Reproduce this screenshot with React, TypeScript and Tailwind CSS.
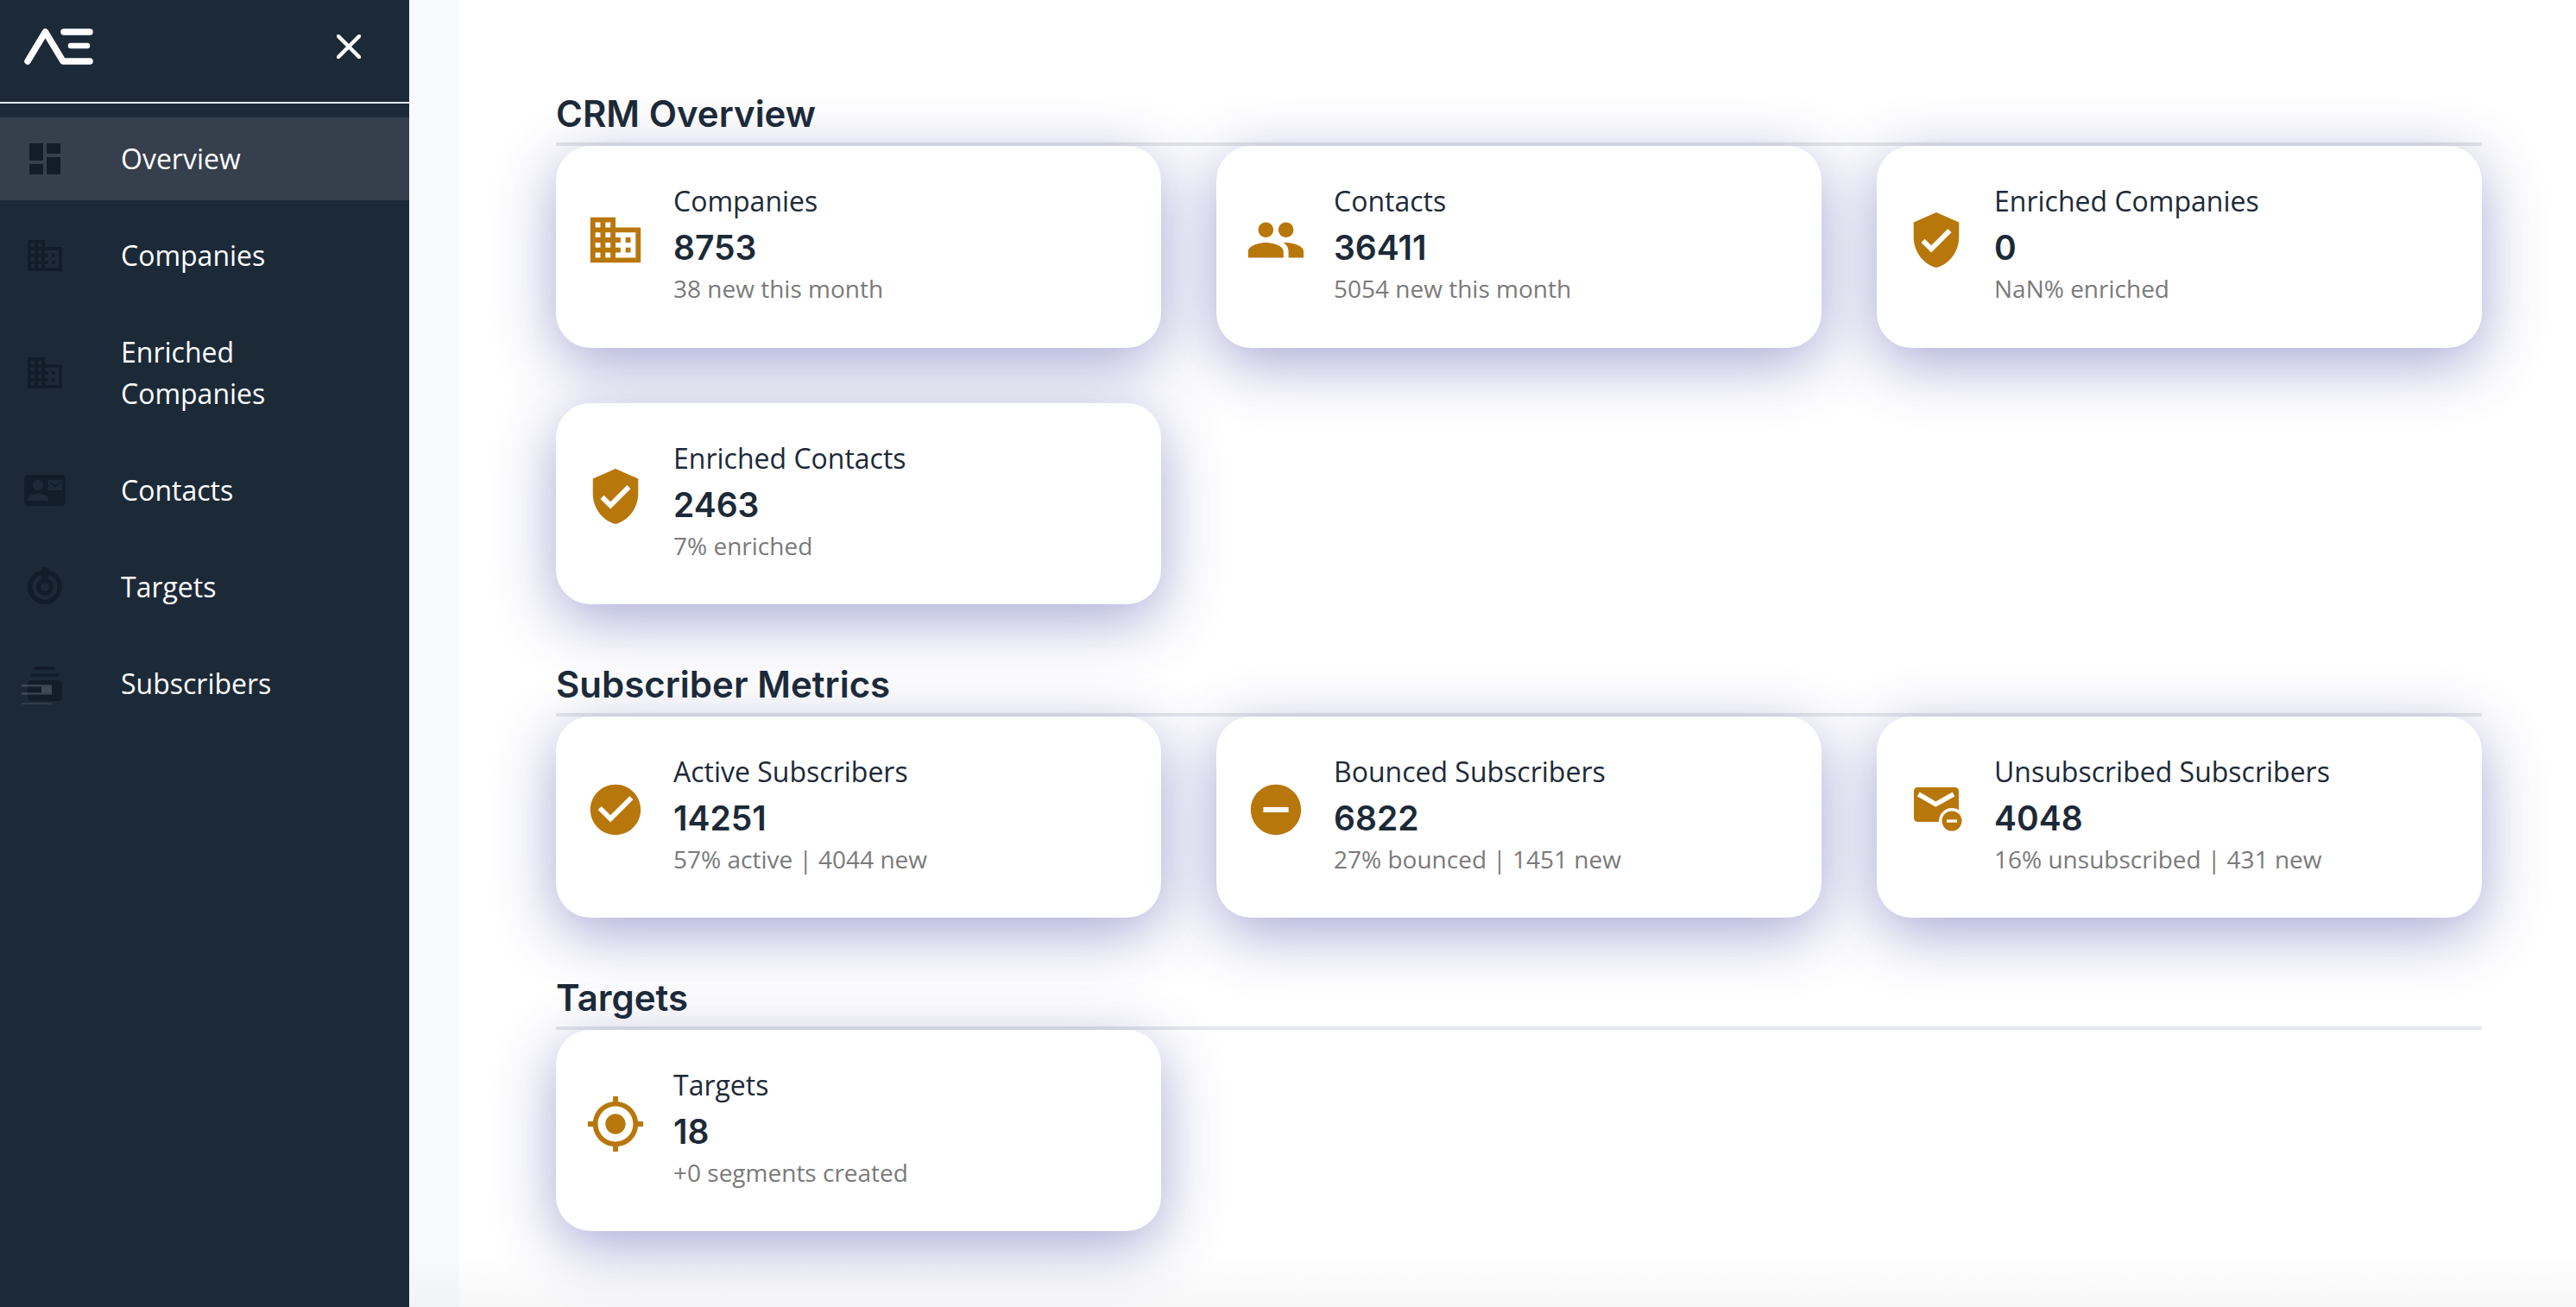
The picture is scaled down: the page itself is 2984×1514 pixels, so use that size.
const OPEN = "font-['Open_Sans',sans-serif]";

const icons: Record<string, string> = {
  dashboard: "M3 13h8V3H3v10zm0 8h8v-6H3v6zm10 0h8V11h-8v10zm0-18v6h8V3h-8z",
  business:
    "M12 7V3H2v18h20V7H12zM6 19H4v-2h2v2zm0-4H4v-2h2v2zm0-4H4V9h2v2zm0-4H4V5h2v2zm4 12H8v-2h2v2zm0-4H8v-2h2v2zm0-4H8V9h2v2zm0-4H8V5h2v2zm10 12h-8v-2h2v-2h-2v-2h2v-2h-2V9h8v10zm-2-8h-2v2h2v-2zm0 4h-2v2h2v-2z",
  contactMail:
    "M21 8V7l-3 2-3-2v1l3 2 3-2zm1-5H2C.9 3 0 3.9 0 5v14c0 1.1.9 2 2 2h20c1.1 0 1.99-.9 1.99-2L24 5c0-1.1-.9-2-2-2zM8 6c1.66 0 3 1.34 3 3s-1.34 3-3 3-3-1.34-3-3 1.34-3 3-3zm6 12H2v-1c0-2 4-3.1 6-3.1s6 1.1 6 3.1v1zm8-6h-8V6h8v6z",
  people:
    "M16 11c1.66 0 2.99-1.34 2.99-3S17.66 5 16 5c-1.66 0-3 1.34-3 3s1.34 3 3 3zm-8 0c1.66 0 2.99-1.34 2.99-3S9.66 5 8 5C6.34 5 5 6.34 5 8s1.34 3 3 3zm0 2c-2.33 0-7 1.17-7 3.5V19h14v-2.5c0-2.33-4.67-3.5-7-3.5zm8 0c-.29 0-.62.02-.97.05 1.16.84 1.97 1.97 1.97 3.45V19h6v-2.5c0-2.33-4.67-3.5-7-3.5z",
  verified:
    "M12 1L3 5v6c0 5.55 3.84 10.74 9 12 5.16-1.26 9-6.45 9-12V5l-9-4zm-2 16l-4-4 1.41-1.41L10 14.17l6.59-6.59L18 9l-8 8z",
  checkCircle:
    "M12 2C6.48 2 2 6.48 2 12s4.48 10 10 10 10-4.48 10-10S17.52 2 12 2zm-2 15l-5-5 1.41-1.41L10 14.17l7.59-7.59L19 8l-9 9z",
  removeCircle: "M12 2C6.48 2 2 6.48 2 12s4.48 10 10 10 10-4.48 10-10S17.52 2 12 2zm5 11H7v-2h10v2z",
  gps: "M12 8c-2.21 0-4 1.79-4 4s1.79 4 4 4 4-1.79 4-4-1.79-4-4-4zm8.94 3c-.46-4.17-3.77-7.48-7.94-7.94V1h-2v2.06C6.83 3.52 3.52 6.83 3.06 11H1v2h2.06c.46 4.17 3.77 7.48 7.94 7.94V23h2v-2.06c4.17-.46 7.48-3.77 7.94-7.94H23v-2h-2.06zM12 19c-3.87 0-7-3.13-7-7s3.13-7 7-7 7 3.13 7 7-3.13 7-7 7z",
};

function Icon({ name, className }: { name: string; className: string }) {
  return (
    <svg viewBox="0 0 24 24" fill="currentColor" className={className}>
      <path d={icons[name]} />
    </svg>
  );
}

// the sidebar target icon has a thick needle at the top
function TargetIcon() {
  return (
    <svg viewBox="0 0 24 24" fill="none" stroke="currentColor" className="w-[48px] h-[48px]">
      <circle cx="12" cy="12" r="8.6" strokeWidth="2.8" />
      <circle cx="12" cy="12" r="3.7" strokeWidth="2.6" />
      <path
        d="M12 .5c1.6 0 2.5 1.2 2.5 2.8 0 1.8-1 4-1.2 5.7h-2.6C10.5 7.3 9.5 5.1 9.5 3.3 9.5 1.7 10.4.5 12 .5z"
        fill="currentColor"
        stroke="none"
      />
    </svg>
  );
}

function SubscribersIcon() {
  return (
    <svg viewBox="0 0 24 24" fill="currentColor" className="w-[48px] h-[48px] overflow-visible">
      <path d="M20 8H4V6h16v2zm-2-6H6v2h12V2zm4 10v8c0 1.1-.9 2-2 2H4c-1.1 0-2-.9-2-2v-8c0-1.1.9-2 2-2h16c1.1 0 2 .9 2 2z" />
      <rect x="-1.5" y="12.6" width="17.5" height="1.1" fill="#9aa1ac" opacity="0.3" />
      <rect x="-1.5" y="17.2" width="17.5" height="1.1" fill="#9aa1ac" opacity="0.3" />
      <rect x="-1.5" y="23" width="17.5" height="1" fill="#9aa1ac" opacity="0.15" />
      <rect x="10" y="13.7" width="6" height="3.5" fill="#9aa1ac" opacity="0.35" />
    </svg>
  );
}

function UnsubscribeIcon() {
  return (
    <svg viewBox="0 0 60 60" className="w-[60px] h-[60px]">
      <rect x="4" y="4" width="52" height="40" rx="4.5" fill="#b8770b" />
      <path d="M9.3 12 L29.3 23.6 L50 12" fill="none" stroke="#ffffff" strokeWidth="5.5" />
      <circle cx="48" cy="43" r="15" fill="#ffffff" />
      <circle cx="48" cy="43" r="11.5" fill="#b8770b" />
      <rect x="42" y="41.4" width="12" height="3.3" fill="#ffffff" />
    </svg>
  );
}

const navItems = [
  { label: "Overview", icon: <Icon name="dashboard" className="w-[48px] h-[48px]" />, active: true },
  { label: "Companies", icon: <Icon name="business" className="w-[48px] h-[48px]" /> },
  { label: "Enriched Companies", icon: <Icon name="business" className="w-[48px] h-[48px]" /> },
  { label: "Contacts", icon: <Icon name="contactMail" className="w-[48px] h-[48px]" /> },
  { label: "Targets", icon: <TargetIcon /> },
  { label: "Subscribers", icon: <SubscribersIcon /> },
];

const sections = [
  {
    title: "CRM Overview",
    cards: [
      { icon: "business", label: "Companies", value: "8753", note: "38 new this month" },
      { icon: "people", label: "Contacts", value: "36411", note: "5054 new this month" },
      { icon: "verified", label: "Enriched Companies", value: "0", note: "NaN% enriched" },
      { icon: "verified", label: "Enriched Contacts", value: "2463", note: "7% enriched" },
    ],
  },
  {
    title: "Subscriber Metrics",
    cards: [
      { icon: "checkCircle", label: "Active Subscribers", value: "14251", note: "57% active | 4044 new" },
      { icon: "removeCircle", label: "Bounced Subscribers", value: "6822", note: "27% bounced | 1451 new" },
      { icon: "unsubscribe", label: "Unsubscribed Subscribers", value: "4048", note: "16% unsubscribed | 431 new" },
    ],
  },
  {
    title: "Targets",
    cards: [{ icon: "gps", label: "Targets", value: "18", note: "+0 segments created" }],
  },
];

function Logo() {
  return (
    <svg viewBox="0 0 80 42" className="w-[80px] h-[42px]" fill="none" stroke="#ffffff" strokeWidth="7.5" strokeLinecap="round" strokeLinejoin="round">
      <path d="M4 38 L24.5 4 L45 38 L76 38" />
      <path d="M46 4 L76 4" />
      <path d="M54 20 L73 20" strokeWidth="6.5" />
    </svg>
  );
}

function Sidebar() {
  return (
    <aside className={`${OPEN} w-[474px] shrink-0 bg-[#1c2a38] text-white`}>
      <div className="h-[120px] flex items-center justify-between pl-[28px] pr-[56px] pb-[10px] border-b-2 border-[#e0e7ef]">
        <Logo />
        <svg viewBox="0 0 28 28" className="w-[28px] h-[28px]" stroke="#ffffff" strokeWidth="4.5" strokeLinecap="round">
          <path d="M2 2 L26 26 M26 2 L2 26" />
        </svg>
      </div>
      <nav className="flex flex-col gap-[16px] pt-[16px]">
        {navItems.map((item) => (
          <div
            key={item.label}
            className={`flex items-center py-[24px] pl-[28px] text-[32px] leading-[48px] ${item.active ? "bg-[#363f4c]" : ""}`}
          >
            <div className="w-[48px] flex justify-center text-[#131d2a]">{item.icon}</div>
            <span className="ml-[64px] w-[240px]">{item.label}</span>
          </div>
        ))}
      </nav>
    </aside>
  );
}

function StatCard({ icon, label, value, note }: { icon: string; label: string; value: string; note: string }) {
  return (
    <div className="h-[233.6px] rounded-[40px] bg-white flex items-center pl-[34px] shadow-[0_18px_70px_rgba(60,65,160,0.45)]">
      <div className="w-[70px] h-[70px] shrink-0 -mt-[16px] flex items-center justify-center text-[#b8770b]">
        {icon === "unsubscribe" ? <UnsubscribeIcon /> : <Icon name={icon} className="w-[70px] h-[70px]" />}
      </div>
      <div className="ml-[32px] pb-[10px]">
        <div className="text-[32px] leading-[48px] text-[#1c2a38]">{label}</div>
        <div className="font-['Inter',sans-serif] font-semibold text-[39px] leading-[60px] text-[#1c2a38]">{value}</div>
        <div className="text-[28px] leading-[35px] text-[#7a7a7a]">{note}</div>
      </div>
    </div>
  );
}

export default function App() {
  return (
    <div className="flex h-[1514px] w-full overflow-hidden">
      <Sidebar />
      <div className="w-[58px] shrink-0 bg-[linear-gradient(#f8f9fc_96%,#f2f3f6)]" />
      <main className={`${OPEN} flex-1 pl-[112px] pr-[109px] pt-[104px] bg-[linear-gradient(#ffffff_96%,#f7f7f8)]`}>
        {sections.map((section) => (
          <section key={section.title} className="mb-[64.5px]">
            <h2 className="font-['Inter',sans-serif] font-semibold text-[42px] leading-[55px] pb-[6px] text-[#1c2a38] border-b-4 border-[#e5e7eb]">
              {section.title}
            </h2>
            <div className="grid grid-cols-3 gap-[64px]">
              {section.cards.map((card) => (
                <StatCard key={card.label} {...card} />
              ))}
            </div>
          </section>
        ))}
      </main>
    </div>
  );
}
